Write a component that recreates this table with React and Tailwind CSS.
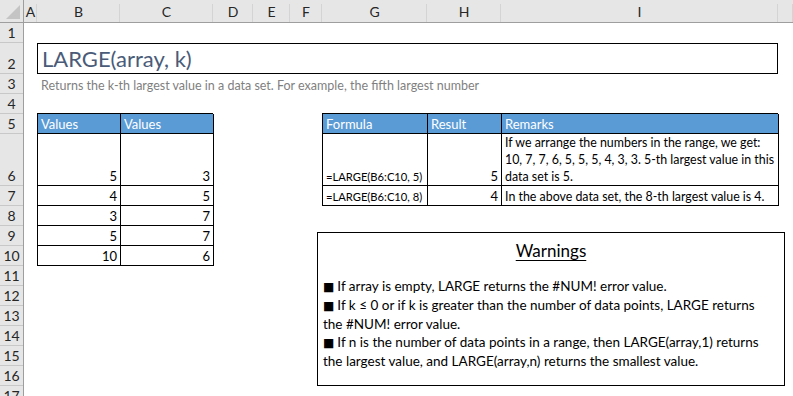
import React from "react";

const colHeads = [
  { l: "A", c: "w-[13px]" },
  { l: "B", c: "w-[83px]" },
  { l: "C", c: "w-[93px]" },
  { l: "D", c: "w-[40px]" },
  { l: "E", c: "w-[37px]" },
  { l: "F", c: "w-[32px]" },
  { l: "G", c: "w-[105px]" },
  { l: "H", c: "w-[74px]" },
  { l: "I", c: "w-[277px]" },
  { l: "", c: "flex-1" },
];

const rowHeads = [
  { n: 1, c: "h-[20px]" },
  { n: 2, c: "h-[31px]" },
  { n: 3, c: "h-[20px]" },
  { n: 4, c: "h-[20px]" },
  { n: 5, c: "h-[20px]" },
  { n: 6, c: "h-[52px]" },
  { n: 7, c: "h-[20px]" },
  { n: 8, c: "h-[20px]" },
  { n: 9, c: "h-[20px]" },
  { n: 10, c: "h-[20px]" },
  { n: 11, c: "h-[20px]" },
  { n: 12, c: "h-[20px]" },
  { n: 13, c: "h-[20px]" },
  { n: 14, c: "h-[20px]" },
  { n: 15, c: "h-[20px]" },
  { n: 16, c: "h-[20px]" },
  { n: 17, c: "h-[20px]" },
];

const values = [
  [5, 3],
  [4, 5],
  [3, 7],
  [5, 7],
  [10, 6],
];

const cell = "border-r border-b border-black flex items-end px-[3px] leading-[17px] whitespace-nowrap overflow-hidden";
const head = "border-r border-b border-black bg-[#5b9bd5] text-white flex items-end px-[3px] leading-[17px]";

function Bullet() {
  return <span className="font-['DejaVu_Sans',sans-serif] text-[12px] mr-[3px]">■</span>;
}

export default function App() {
  return (
    <div className="relative w-[793px] h-[396px] overflow-hidden bg-white font-['Lato',sans-serif] text-[13px] text-black">
      {/* column header */}
      <div className="flex h-[23px] bg-[#e6e6e6] border-b border-[#9e9e9e] text-[#262626] text-[14px]">
        <div className="relative w-[24px] border-r border-[#9e9e9e]">
          <div className="absolute right-[3px] bottom-[3px] w-0 h-0 border-l-[14px] border-l-transparent border-b-[14px] border-b-[#c4c4c4]" />
        </div>
        {colHeads.map((h, i) => (
          <div key={i} className={`${h.c} relative flex items-center justify-center`}>
            {h.l}
            <div className="absolute right-0 top-[4px] bottom-0 w-px bg-[#d4d4d4]" />
          </div>
        ))}
      </div>

      <div className="flex">
        {/* row header */}
        <div className="w-[24px] shrink-0 flex flex-col bg-[#e6e6e6] border-r border-[#9e9e9e] text-[#262626] text-[14px]">
          {rowHeads.map((r) => (
            <div key={r.n} className={`${r.c} shrink-0 border-b border-[#c8c8c8] flex items-end justify-center leading-[18px]`}>
              {r.n}
            </div>
          ))}
        </div>

        {/* sheet */}
        <div className="flex-1 grid grid-cols-[13px_83px_93px_40px_37px_32px_105px_74px_277px_1fr] grid-rows-[20px_31px_20px_20px_20px_52px_20px_20px_20px_20px_20px_20px_20px_20px_20px_20px_20px]">
          {/* title */}
          <div className="col-start-2 col-end-10 row-start-2 border border-black flex items-center pl-[4px] text-[22px] font-normal text-[#4a5b78] leading-none">
            LARGE(array, k)
          </div>
          {/* description */}
          <div className="col-start-2 col-end-10 row-start-3 flex items-end pl-[4px] text-[12.5px] text-[#7f7f7f] whitespace-nowrap leading-[17px]">
            Returns the k-th largest value in a data set. For example, the fifth largest number
          </div>

          {/* values table */}
          <div className="col-start-2 col-end-4 row-start-5 row-end-11 grid grid-cols-[83px_93px] grid-rows-[20px_52px_20px_20px_20px_20px] border-l border-t border-black -mt-px">
            <div className={head}>Values</div>
            <div className={head}>Values</div>
            {values.map((r, i) => (
              <React.Fragment key={i}>
                <div className={`${cell} justify-end`}>{r[0]}</div>
                <div className={`${cell} justify-end`}>{r[1]}</div>
              </React.Fragment>
            ))}
          </div>

          {/* formula table */}
          <div className="col-start-7 col-end-10 row-start-5 row-end-8 grid grid-cols-[105px_74px_277px] grid-rows-[20px_52px_20px] border-l border-t border-black -mt-px">
            <div className={head}>Formula</div>
            <div className={head}>Result</div>
            <div className={head}>Remarks</div>
            <div className={`${cell} text-[11.2px] px-[2px]`}>=LARGE(B6:C10, 5)</div>
            <div className={`${cell} justify-end`}>5</div>
            <div className={`${cell} text-[12.4px]`}>
              <span>
                If we arrange the numbers in the range, we get:
                <br />
                10, 7, 7, 6, 5, 5, 5, 4, 3, 3. 5-th largest value in this
                <br />
                data set is 5.
              </span>
            </div>
            <div className={`${cell} text-[11.2px] px-[2px]`}>=LARGE(B6:C10, 8)</div>
            <div className={`${cell} justify-end`}>4</div>
            <div className={`${cell} text-[12.4px]`}>In the above data set, the 8-th largest value is 4.</div>
          </div>
        </div>
      </div>

      {/* warnings text box */}
      <div className="absolute left-[317px] top-[232px] w-[468px] h-[154px] border border-black bg-white px-[5px]">
        <div className="text-center text-[17px] underline underline-offset-[3px] mt-[7px] leading-[22px]">Warnings</div>
        <div className="mt-[15px] text-[13.5px] leading-[18px] whitespace-nowrap">
          <div><Bullet />If array is empty, LARGE returns the #NUM! error value.</div>
          <div><Bullet />If k ≤ 0 or if k is greater than the number of data points, LARGE returns</div>
          <div>the #NUM! error value.</div>
          <div><Bullet />If n is the number of data points in a range, then LARGE(array,1) returns</div>
          <div>the largest value, and LARGE(array,n) returns the smallest value.</div>
        </div>
      </div>
    </div>
  );
}
